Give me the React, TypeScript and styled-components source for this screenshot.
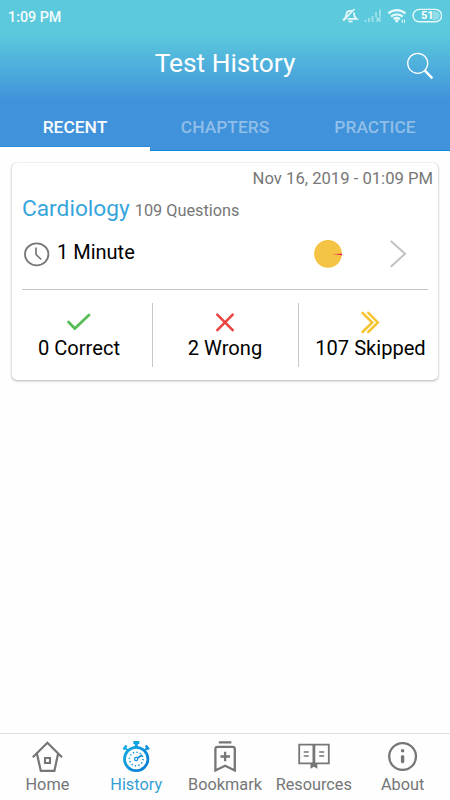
import React from "react";
import styled, { createGlobalStyle } from "styled-components";

const GlobalStyle = createGlobalStyle`
  * { box-sizing: border-box; }
  body { margin: 0; background: #fefefe; font-family: Roboto, "Liberation Sans", sans-serif; }
  svg { display: block; flex: none; }
`;

const Screen = styled.div`
  width: 450px;
  height: 800px;
  display: flex;
  flex-direction: column;
  background: #fefefe;
  overflow: hidden;
`;

const Top = styled.header`
  height: 151px;
  flex: none;
  display: flex;
  flex-direction: column;
  color: #fff;
  background: linear-gradient(#5ccadc 0, #5ccadc 32px, #4dacdc 70px, #4092da 101px, #4092da 100%);
`;

const StatusBar = styled.div`
  height: 32px;
  display: flex;
  align-items: center;
  padding: 0 8px;
`;

const Time = styled.span`
  flex: 1;
  padding-top: 1px;
  font-size: 14.3px;
  line-height: 16px;
  font-weight: 500;
  color: #f4fcfd;
`;

const TitleBar = styled.div`
  height: 71px;
  display: grid;
  grid-template-columns: 60px 1fr 60px;
  align-items: start;
`;

const Title = styled.h1`
  grid-column: 2;
  margin: 15px 0 0;
  text-align: center;
  font-size: 26.3px;
  line-height: 32px;
  font-weight: 400;
`;

const SearchButton = styled.button`
  margin: 19px 0 0 15px;
  padding: 0;
  border: 0;
  width: 30px;
  height: 30px;
  background: none;
`;

const Tabs = styled.nav`
  height: 48px;
  display: grid;
  grid-template-columns: repeat(3, 1fr);
`;

const Tab = styled.div<{ $active?: boolean }>`
  display: flex;
  align-items: flex-start;
  justify-content: center;
  padding-top: 14px;
  font-size: 17.4px;
  line-height: 20px;
  font-weight: 500;
  color: ${(p) => (p.$active ? "#f8fbfe" : "#8fbee9")};
  border-bottom: ${(p) => (p.$active ? "4px solid #fefefe" : "1px solid #0788d8")};
  box-shadow: ${(p) => (p.$active ? "inset 0 -1px #2a8bd8" : "none")};
`;

const Card = styled.article`
  margin: 12px 12px 0;
  width: 426px;
  height: 217px;
  border-radius: 5px;
  background: #fff;
  box-shadow: 0 0 1px rgba(0, 0, 0, 0.22), 0 1px 3px rgba(0, 0, 0, 0.28);
  display: flex;
  flex-direction: column;
`;

const DateText = styled.div`
  height: 30px;
  padding: 6px 5px 0 0;
  text-align: right;
  font-size: 16.65px;
  line-height: 20px;
  color: #777;
`;

const Heading = styled.div`
  height: 33px;
  display: flex;
  align-items: baseline;
  gap: 5px;
  padding-left: 10px;
`;

const Subject = styled.span`
  font-size: 22.7px;
  line-height: 32px;
  color: #37a5dc;
`;

const Count = styled.span`
  font-size: 16.3px;
  color: #777;
`;

const Summary = styled.div`
  height: 64px;
  display: flex;
  align-items: center;
  margin: 0 10px;
  padding: 0 20px 7px 1px;
  border-bottom: 1px solid #c4c4c4;
`;

const Duration = styled.span`
  flex: 1;
  padding: 0 0 4px 7px;
  font-size: 20px;
  line-height: 24px;
  color: #000;
`;

const Chevron = styled.span`
  margin-left: 46px;
`;

const Stats = styled.div`
  height: 64px;
  margin-top: 13px;
  display: grid;
  grid-template-columns: 140px 146px 140px;
`;

const Stat = styled.div`
  display: flex;
  flex-direction: column;
  align-items: center;
  padding-top: 6px;
  font-size: 20.1px;
  line-height: 24px;
  color: #000;
  white-space: nowrap;
  &:first-child { padding-right: 6px; }
  &:nth-child(2) { padding-right: 1px; }
  &:last-child { padding-left: 4px; }
  & + & { border-left: 1px solid #c8c8c8; }
`;

const BottomNav = styled.nav`
  margin-top: auto;
  height: 67px;
  border-top: 1px solid #dedede;
  padding: 6px 3px 0 3px;
  display: grid;
  grid-template-columns: repeat(5, 1fr);
`;

const NavItem = styled.div<{ $active?: boolean }>`
  display: flex;
  flex-direction: column;
  align-items: center;
  gap: 1px;
  font-size: 16.3px;
  line-height: 20px;
  color: ${(p) => (p.$active ? "#359fd4" : "#747677")};
  white-space: nowrap;
`;

const StatusIcons = () => (
  <svg width="102" height="20" viewBox="340 6 102 20" fill="none" stroke="#e7f8fa">
    <path d="M344.5 18.8c2-1.5 2-3 2-5 .4-4 7-4 7.6 0 0 2 0 3.5 2.2 5z" strokeWidth="1.8" />
    <path d="M348.5 21.5h4" strokeWidth="1.7" />
    <path d="m344.7 20.6 11-11" stroke="#5ccadc" strokeWidth="1.5" />
    <path d="M343.3 20.6 354.5 9" strokeWidth="1.6" />
    <path d="M365.5 22v-2M369 22v-4M372.5 22v-6M376 17v-5M380 16.5V9.5" stroke="#98dfe8" strokeWidth="2" />
    <path d="m376.5 17.5 4 4m0-4-4 4" stroke="#b4e8ef" strokeWidth="1.3" />
    <path d="M388.4 13.4c5-4.4 12-4.4 17 0M391 16.6c3.4-3 8.4-3 11.8 0M393.7 19.2c2-1.5 4.2-1.5 6.2 0" strokeWidth="2.3" />
    <circle cx="396.8" cy="20.8" r="1.6" fill="#e7f8fa" stroke="none" />
    <path d="M402.3 22.8v-3m2.2 0v3" strokeWidth="1.1" />
    <rect x="413" y="9.4" width="28.6" height="12.4" rx="6.2" strokeWidth="1.4" />
    <path d="M432.5 11.2h3q4 1 4 4.4t-4 4.4h-3z" fill="#91dce7" stroke="none" />
    <text x="427.3" y="19.3" textAnchor="middle" fill="#fff" stroke="none" fontSize="11" fontWeight="700" fontFamily="Roboto">51</text>
  </svg>
);

const SearchIcon = () => (
  <svg width="30" height="30" viewBox="405 51 30 30" fill="none" stroke="#fff">
    <circle cx="417.7" cy="63.3" r="10" strokeWidth="1.3" />
    <path d="m424.4 70.2 8 8.2" strokeWidth="2.4" />
  </svg>
);

const ClockIcon = () => (
  <svg width="27" height="26" viewBox="23 241 27 26" fill="none" stroke="#777">
    <ellipse cx="36.7" cy="254.3" rx="11.7" ry="11" strokeWidth="1.8" />
    <path d="M36 247.5v7l5.2 5" strokeWidth="1.7" />
  </svg>
);

const PieIcon = () => (
  <svg width="28" height="28" viewBox="314 240 28 28">
    <defs>
      <linearGradient id="wrongSlice" gradientUnits="userSpaceOnUse" x1="330" x2="342" y1="254" y2="254">
        <stop stopColor="#f5b342" /><stop offset=".7" stopColor="#ec364d" /><stop offset="1" stopColor="#e70a60" />
      </linearGradient>
    </defs>
    <circle cx="328" cy="253.8" r="13.9" fill="#f6c445" />
    <path d="m329 254 13-.2v1.4z" fill="url(#wrongSlice)" />
  </svg>
);

const HomeIcon = () => (
  <svg width="32" height="34" viewBox="31.2 740 32 34" fill="none" stroke="#747677" strokeWidth="2.2">
    <path d="m33 757.2 14.6-14.5 14.6 14.5M37.2 754l3.8 16.9h13.6l3.6-16.9" />
    <path d="M45.2 758h5v5h-5z" strokeWidth="2.1" />
  </svg>
);

const HistoryIcon = () => (
  <svg width="32" height="34" viewBox="120 740 32 34" fill="none" stroke="url(#watch)">
    <defs>
      <linearGradient id="watch" gradientUnits="userSpaceOnUse" x1="123" y1="745" x2="150" y2="770">
        <stop stopColor="#14afe1" /><stop offset="1" stopColor="#0878d6" />
      </linearGradient>
    </defs>
    <circle cx="136.2" cy="759" r="11.7" strokeWidth="2.8" />
    <circle cx="136.2" cy="759" r="6.8" strokeWidth="1.5" strokeDasharray="1.3 2.26" />
    <path d="M133.3 741h6v3h-1.5v3h-3v-3h-1.5z" fill="url(#watch)" stroke="none" />
    <path d="m127.5 750.5-2-2.3m19.3 2.3 2-2.3" strokeWidth="2" />
    <path d="m123.5 749.5 3-4m22.3 4-3-4" strokeWidth="2.5" />
    <circle cx="136.1" cy="759" r="1.6" strokeWidth="1.2" />
    <path d="m137.5 758 4.7-3.1" strokeWidth="1.8" />
  </svg>
);

const BookmarkIcon = () => (
  <svg width="32" height="34" viewBox="208.9 740 32 34" fill="none" stroke="#747677" strokeWidth="2.3">
    <path d="M215.3 770.5v-21.5q0-2.2 2.2-2.2h15q2.2 0 2.2 2.2v21.5l-9.7-4.8zM218.7 742.3h12.6M220.3 756.5h9.6M225 751.7v9.6" />
  </svg>
);

const ResourcesIcon = () => (
  <svg width="34" height="34" viewBox="296.8 740 34 34" fill="none" stroke="#747677">
    <path d="M299 744.7h29.6v18.6H299z" strokeWidth="1.8" />
    <path d="M313.7 744v20" strokeWidth="2.8" />
    <path d="M310.3 763h6.8v5.8l-3.4-2-3.4 2z" fill="#747677" stroke="none" />
    <path d="M303.5 752h5M303.5 756h5M319 752h5M319 756h5" strokeWidth="1.5" />
  </svg>
);

const AboutIcon = () => (
  <svg width="32" height="34" viewBox="387 740 32 34" fill="none" stroke="#747677">
    <circle cx="402.6" cy="756.5" r="13.4" strokeWidth="2.3" />
    <circle cx="402.6" cy="750.7" r="1.8" fill="#747677" stroke="none" />
    <path d="M402.6 756.6v5" strokeWidth="3.4" strokeLinecap="round" />
  </svg>
);

export default function App() {
  return (
    <Screen>
      <GlobalStyle />
      <Top>
        <StatusBar><Time>1:09 PM</Time><StatusIcons /></StatusBar>
        <TitleBar>
          <Title>Test History</Title>
          <SearchButton aria-label="Search"><SearchIcon /></SearchButton>
        </TitleBar>
        <Tabs><Tab $active>RECENT</Tab><Tab>CHAPTERS</Tab><Tab>PRACTICE</Tab></Tabs>
      </Top>
      <Card>
        <DateText>Nov 16, 2019 - 01:09 PM</DateText>
        <Heading><Subject>Cardiology</Subject><Count>109 Questions</Count></Heading>
        <Summary>
          <ClockIcon />
          <Duration>1 Minute</Duration>
          <PieIcon />
          <Chevron>
            <svg width="20" height="30" viewBox="388 239 20 30" fill="none" stroke="#c2c2c2" strokeWidth="2"><path d="m390.8 241 14.2 12.8-14.2 13" /></svg>
          </Chevron>
        </Summary>
        <Stats>
          <Stat>
            <svg width="26" height="27" viewBox="66 309 26 27" fill="none" stroke="#58bd59" strokeWidth="2.8" strokeLinecap="round"><path d="m68.5 322 6.3 6.5L89 315" /></svg>
            0 Correct
          </Stat>
          <Stat>
            <svg width="26" height="27" viewBox="212 309 26 27" fill="none" stroke="#ea4540" strokeWidth="2.6" strokeLinecap="round"><path d="m217.3 314.7 15.4 15.4m0-15.4-15.4 15.4" /></svg>
            2 Wrong
          </Stat>
          <Stat>
            <svg width="26" height="27" viewBox="357.5 309 26 27" fill="none" stroke="#f6c331" strokeWidth="2.5" strokeLinecap="round"><path d="m362 312.8 9.8 9.7-9.8 9.5M367.8 312.8l9.5 9.7-9.5 9.5" /></svg>
            107 Skipped
          </Stat>
        </Stats>
      </Card>
      <BottomNav>
        <NavItem><HomeIcon />Home</NavItem>
        <NavItem $active><HistoryIcon />History</NavItem>
        <NavItem><BookmarkIcon />Bookmark</NavItem>
        <NavItem><ResourcesIcon />Resources</NavItem>
        <NavItem><AboutIcon />About</NavItem>
      </BottomNav>
    </Screen>
  );
}
